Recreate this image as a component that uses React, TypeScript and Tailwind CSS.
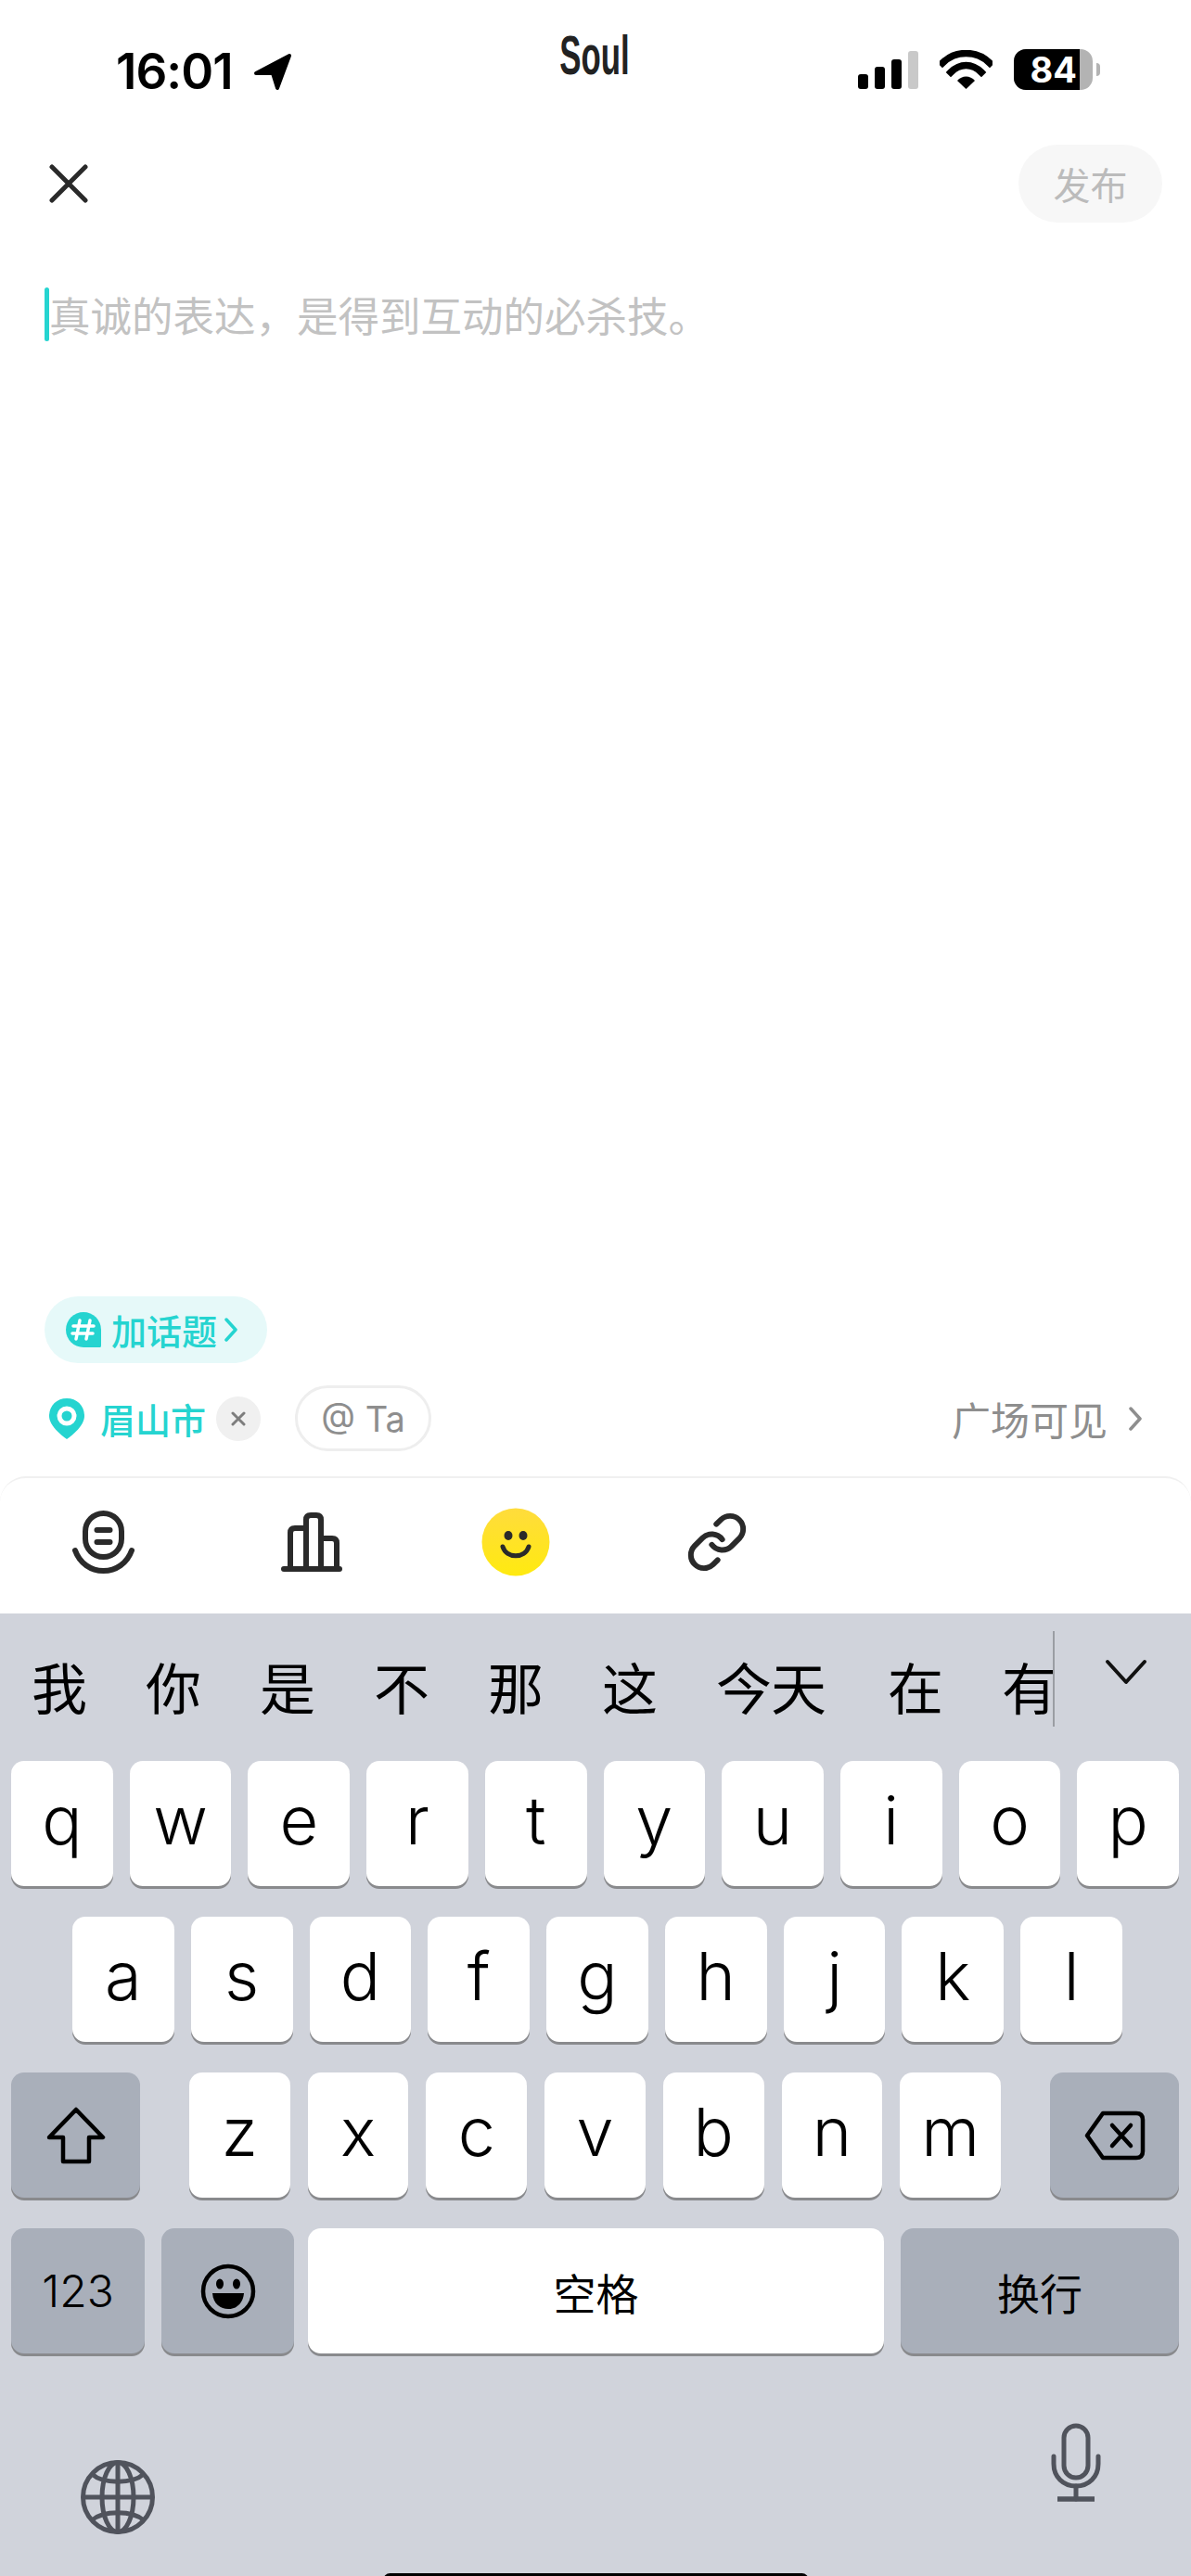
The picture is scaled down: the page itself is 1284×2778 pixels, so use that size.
import React from "react";
import { Link } from "lucide-react";

const row1 = ["q", "w", "e", "r", "t", "y", "u", "i", "o", "p"];
const row2 = ["a", "s", "d", "f", "g", "h", "j", "k", "l"];
const row3 = ["z", "x", "c", "v", "b", "n", "m"];
const candidates = [
  { text: "我", w: "w-[56px]" },
  { text: "你", w: "w-[56px]" },
  { text: "是", w: "w-[56px]" },
  { text: "不", w: "w-[56px]" },
  { text: "那", w: "w-[56px]" },
  { text: "这", w: "w-[56px]" },
  { text: "今天", w: "w-[118px]" },
  { text: "在", w: "w-[56px]" },
  { text: "有", w: "w-[56px]" },
];

const Key = ({ label }: { label: string }) => (
  <div className="flex h-[135px] flex-1 items-center justify-center rounded-[14px] bg-white pb-[8px] font-['Inter',sans-serif] text-[72px] font-light leading-none text-black shadow-[0_3px_0_#898a8d]">
    {label}
  </div>
);

const SpecialKey = ({ className, children }: { className: string; children: React.ReactNode }) => (
  <div className={`flex h-[135px] items-center justify-center rounded-[14px] bg-[#a9afba] shadow-[0_3px_0_#898a8d] ${className}`}>
    {children}
  </div>
);

const StatusBar = () => (
  <div className="flex h-[156px] items-start pl-[125px]">
    <div className="mt-[50px] flex w-[190px] items-center justify-between">
      <span className="font-['Inter',sans-serif] text-[53px] font-semibold leading-[54px] tracking-[-1px] text-black">16:01</span>
      <svg width="42" height="41" viewBox="0 0 42 41">
        <path d="M3 22 L39 3 L26 38 L21 22 Z" fill="#000" stroke="#000" strokeWidth="4" strokeLinejoin="round" />
      </svg>
    </div>
    <div className="ml-[289px] mt-[30px] flex w-[74px] justify-center">
      <span className="scale-x-[0.58] font-['Liberation_Sans',sans-serif] text-[60px] font-bold leading-[60px] text-[#222]">Soul</span>
    </div>
    <div className="ml-[247px] mt-[55px] flex h-[41px] items-end gap-[7px]">
      <div className="h-[16px] w-[11px] rounded-[3px] bg-black" />
      <div className="h-[24px] w-[11px] rounded-[3px] bg-black" />
      <div className="h-[32px] w-[11px] rounded-[3px] bg-black" />
      <div className="h-[41px] w-[11px] rounded-[3px] bg-[#c9c9c9]" />
    </div>
    <svg className="ml-[23px] mt-[54px]" width="57" height="42" viewBox="0 0 57 42">
      <path d="M3 14 C17 0 40 0 54 14" fill="none" stroke="#000" strokeWidth="7.5" strokeLinecap="square" />
      <path d="M12 24 C22 14 35 14 45 24" fill="none" stroke="#000" strokeWidth="7.5" strokeLinecap="square" />
      <path d="M19 33 C24 27 33 27 38 33 L28.5 42 Z" fill="#000" />
    </svg>
    <div className="ml-[23px] mt-[53px] flex h-[44px] w-[85px] overflow-hidden rounded-[13px] bg-[#b3b3b3]">
      <div className="flex w-[71px] items-center justify-end bg-black pr-[3px] font-['Inter',sans-serif] text-[38px] font-bold leading-none text-white">84</div>
    </div>
    <div className="ml-[4px] mt-[68px] h-[14px] w-[4px] rounded-r-[4px] bg-[#b3b3b3]" />
  </div>
);

const MicFaceIcon = () => (
  <svg width="67" height="68" viewBox="0 0 67 68" fill="none" stroke="#2a2a2a" strokeWidth="6" strokeLinecap="round">
    <rect x="14" y="3" width="39" height="47" rx="19.5" />
    <path d="M26.5 21 H40.5 M26.5 34 H40.5" />
    <path d="M3 43 C8 57 20 65 33.5 65 C47 65 59 57 64 43" />
  </svg>
);

const ChartIcon = () => (
  <svg width="66" height="64" viewBox="0 0 66 64" fill="none" stroke="#2a2a2a" strokeWidth="6" strokeLinecap="round" strokeLinejoin="round">
    <path d="M10 61 V22 Q10 17 15 17 H27" />
    <path d="M27 61 V8 Q27 3 32 3 H38 Q43 3 43 8 V61" />
    <path d="M43 28 H55 Q60 28 60 33 V61" />
    <path d="M3 61 H63" />
  </svg>
);

const SmileIcon = () => (
  <svg width="74" height="74" viewBox="0 0 74 74">
    <defs>
      <linearGradient id="smile" x1="0" y1="0" x2="0" y2="1">
        <stop offset="0" stopColor="#ffdc3c" />
        <stop offset="1" stopColor="#ffea10" />
      </linearGradient>
    </defs>
    <circle cx="37" cy="37" r="36.5" fill="url(#smile)" />
    <ellipse cx="29" cy="30" rx="4.5" ry="5" fill="#2a2a2a" />
    <ellipse cx="45" cy="30" rx="4.5" ry="5" fill="#2a2a2a" />
    <path d="M23 42 C27 55 47 55 51 42" fill="none" stroke="#2a2a2a" strokeWidth="5" strokeLinecap="round" />
  </svg>
);

const ChevronRight = ({ className, color }: { className: string; color: string }) => (
  <svg className={className} width="16" height="28" viewBox="0 0 16 28" fill="none" stroke={color} strokeWidth="3.5" strokeLinecap="round" strokeLinejoin="round">
    <path d="M3 3 L13 14 L3 25" />
  </svg>
);

const Tags = () => (
  <div className="px-[48px]">
    <div className="flex h-[72px] w-[240px] items-center rounded-[36px] bg-[#e6f9f9] pl-[22px]">
      <svg width="40" height="40" viewBox="0 0 40 40">
        <path d="M20 1 A19 19 0 1 0 20 39 H38 Q39 39 39 37 V20 A19 19 0 0 0 20 1 Z" fill="#25d4d0" />
        <path d="M16 10 L12 30 M27 10 L23 30 M9 16 H31 M8 24 H30" stroke="#fff" strokeWidth="3.5" strokeLinecap="round" />
      </svg>
      <span className="ml-[10px] font-['Noto_Sans_CJK_SC',sans-serif] text-[38px] font-medium leading-none text-[#25d4d0]">加话题</span>
      <ChevronRight className="ml-[7px]" color="#25d4d0" />
    </div>
    <div className="mt-[24px] flex h-[71px] items-center">
      <svg className="ml-[5px]" width="38" height="44" viewBox="0 0 38 44">
        <path d="M19 0 C8 0 0 8 0 19 C0 29 12 39 19 44 C26 39 38 29 38 19 C38 8 30 0 19 0 Z" fill="#25d4d0" />
        <circle cx="19" cy="19" r="8" fill="none" stroke="#fff" strokeWidth="5" />
      </svg>
      <span className="ml-[17px] font-['Noto_Sans_CJK_SC',sans-serif] text-[38px] font-medium leading-none text-[#25d4d0]">眉山市</span>
      <div className="ml-[11px] flex h-[48px] w-[48px] items-center justify-center rounded-full bg-[#f0f0f0]">
        <svg width="18" height="18" viewBox="0 0 18 18" stroke="#7d7d7d" strokeWidth="3" strokeLinecap="round">
          <path d="M3 3 L15 15 M15 3 L3 15" />
        </svg>
      </div>
      <div className="ml-[37px] flex h-[71px] w-[147px] items-center justify-center rounded-[36px] border-[3px] border-[#eeeeee] font-['Inter',sans-serif] text-[38px] leading-none text-[#8e8e8e]">
        @ Ta
      </div>
      <span className="ml-auto font-['Noto_Sans_CJK_SC',sans-serif] text-[42px] leading-none text-[#8e8e8e]">广场可见</span>
      <ChevronRight className="ml-[22px] mr-[4px]" color="#8e8e8e" />
    </div>
  </div>
);

const Toolbar = () => (
  <div className="mt-[27px] flex h-[148px] items-center rounded-t-[28px] border-t-[2px] border-[#f0f0f0] pb-[8px] pl-[78px]">
    <MicFaceIcon />
    <div className="ml-[158px]"><ChartIcon /></div>
    <div className="ml-[150px]"><SmileIcon /></div>
    <Link className="ml-[146px]" size={68} color="#2a2a2a" strokeWidth={2.1} />
  </div>
);

const Keyboard = () => (
  <div className="flex flex-1 flex-col bg-[#d0d3db]">
    <div className="flex h-[159px] items-start">
      <div className="flex h-[122px] w-[1135px] items-center pl-[34px] font-['Noto_Sans_CJK_SC',sans-serif] text-[60px] leading-none text-black">
        <div className="mt-[34px] flex gap-[67px]">
          {candidates.map((c) => (
            <span key={c.text} className={`${c.w} whitespace-nowrap tracking-[-1px]`}>{c.text}</span>
          ))}
        </div>
      </div>
      <div className="mt-[19px] h-[103px] w-[2px] bg-[#9a9da3]" />
      <svg className="ml-[54px] mt-[48px]" width="46" height="30" viewBox="0 0 46 30" fill="none" stroke="#111" strokeWidth="4" strokeLinecap="round" strokeLinejoin="round">
        <path d="M3 4 L23 26 L43 4" />
      </svg>
    </div>

    <div className="flex flex-col gap-[33px]">
      <div className="flex gap-[18px] pl-[12px] pr-[13px]">
        {row1.map((k) => <Key key={k} label={k} />)}
      </div>
      <div className="flex gap-[18px] pl-[78px] pr-[74px]">
        {row2.map((k) => <Key key={k} label={k} />)}
      </div>
      <div className="flex pl-[12px] pr-[13px]">
        <SpecialKey className="w-[139px]">
          <svg width="64" height="62" viewBox="0 0 64 62" fill="none" stroke="#000" strokeWidth="4.5" strokeLinejoin="round">
            <path d="M32 3 L61 33 H46 V59 H18 V33 H3 Z" />
          </svg>
        </SpecialKey>
        <div className="mx-[53px] flex flex-1 gap-[19px]">
          {row3.map((k) => <Key key={k} label={k} />)}
        </div>
        <SpecialKey className="w-[139px]">
          <svg width="66" height="54" viewBox="0 0 66 54" fill="none" stroke="#000" strokeWidth="4.5" strokeLinejoin="round" strokeLinecap="round">
            <path d="M20 3 H56 Q63 3 63 10 V44 Q63 51 56 51 H20 L3 27 Z" />
            <path d="M30 16 L50 38 M50 16 L30 38" />
          </svg>
        </SpecialKey>
      </div>
      <div className="flex gap-[18px] pl-[12px] pr-[13px]">
        <SpecialKey className="w-[144px] font-['Inter',sans-serif] text-[48px] font-light leading-none text-black">123</SpecialKey>
        <SpecialKey className="w-[143px]">
          <svg width="60" height="60" viewBox="0 0 60 60">
            <circle cx="30" cy="30" r="27" fill="none" stroke="#000" strokeWidth="4.5" />
            <ellipse cx="21" cy="22" rx="4" ry="5.5" fill="#000" />
            <ellipse cx="39" cy="22" rx="4" ry="5.5" fill="#000" />
            <path d="M13 32 H47 C46 44 38 49 30 49 C22 49 14 44 13 32 Z" fill="#000" />
          </svg>
        </SpecialKey>
        <div className="flex h-[135px] w-[621px] -ml-[3px] items-center justify-center rounded-[14px] bg-white font-['Noto_Sans_CJK_SC',sans-serif] text-[46px] leading-none text-black shadow-[0_3px_0_#898a8d]">空格</div>
        <SpecialKey className="flex-1 font-['Noto_Sans_CJK_SC',sans-serif] text-[46px] leading-none text-black">换行</SpecialKey>
      </div>
    </div>

    <div className="mt-[75px] flex items-start justify-between pl-[87px] pr-[97px]">
      <svg className="mt-[40px]" width="80" height="80" viewBox="0 0 80 80" fill="none" stroke="#50535c" strokeWidth="5">
        <circle cx="40" cy="40" r="37.5" />
        <ellipse cx="40" cy="40" rx="17" ry="37.5" />
        <path d="M40 2.5 V77.5 M2.5 40 H77.5" />
        <path d="M12 15 C24 26 56 26 68 15 M12 65 C24 54 56 54 68 65" />
      </svg>
      <svg width="54" height="86" viewBox="0 0 54 86" fill="none" stroke="#50535c" strokeWidth="5" strokeLinecap="round">
        <rect x="14" y="3" width="26" height="56" rx="13" />
        <path d="M3 36 V44 C3 58 13 68 27 68 C41 68 51 58 51 44 V36" />
        <path d="M27 68 V82" />
        <path d="M7 82 H47" strokeLinecap="butt" strokeWidth="5.5" />
      </svg>
    </div>
    <div className="mt-[42px] flex justify-center">
      <div className="h-[15px] w-[459px] rounded-full bg-black" />
    </div>
  </div>
);

export default function App() {
  return (
    <div className="flex h-[2778px] w-[1284px] flex-col overflow-hidden bg-white font-['Noto_Sans_CJK_SC',sans-serif]">
      <StatusBar />

      <div className="flex h-[84px] items-center justify-between pl-[53px] pr-[31px]">
        <svg width="42" height="42" viewBox="0 0 42 42" stroke="#2a2a2a" strokeWidth="5" strokeLinecap="round">
          <path d="M3 3 L39 39 M39 3 L3 39" />
        </svg>
        <div className="flex h-[84px] w-[155px] items-center justify-center rounded-[42px] bg-[#f7f7f7] text-[40px] leading-none text-[#bbbbbb]">发布</div>
      </div>

      <div className="mt-[70px] flex items-center pl-[48px]">
        <div className="h-[58px] w-[5px] rounded-full bg-[#25d4d0]" />
        <span className="text-[44.5px] leading-none text-[#c2c2c2]">真诚的表达，是得到互动的必杀技。</span>
      </div>

      <div className="mt-auto">
        <Tags />
        <Toolbar />
      </div>
      <div className="flex h-[1038px] shrink-0 flex-col">
        <Keyboard />
      </div>
    </div>
  );
}
